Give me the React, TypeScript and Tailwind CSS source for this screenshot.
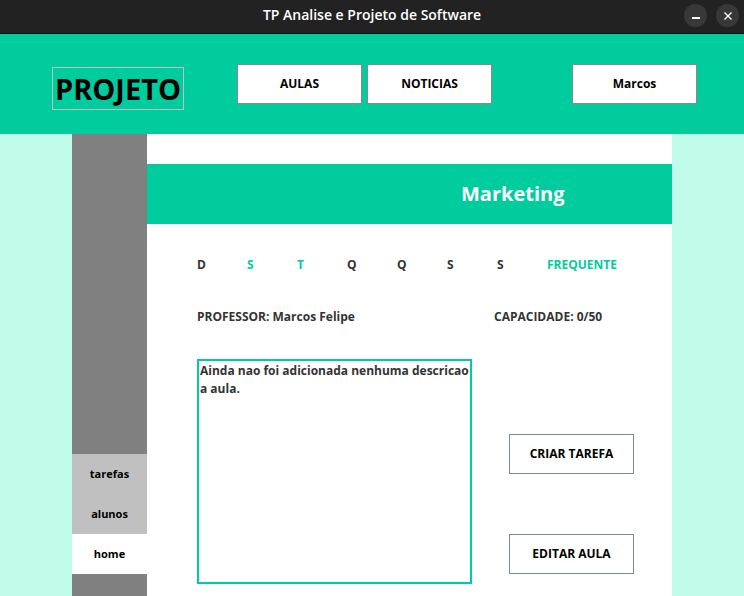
import React from "react";

const font = { fontFamily: '"Open Sans", "Noto Sans", sans-serif' };

export default function App() {
  const days: { l: string; g?: boolean }[] = [
    { l: "D" },
    { l: "S", g: true },
    { l: "T", g: true },
    { l: "Q" },
    { l: "Q" },
    { l: "S" },
    { l: "S" },
  ];
  return (
    <div className="w-[744px] h-[596px] flex flex-col overflow-hidden bg-[#c1fcea]" style={font}>
      {/* title bar */}
      <div className="h-[34px] bg-[#222222] border-b border-black flex items-center relative shrink-0">
        <div className="flex-1 text-center text-white text-[14px] font-semibold pb-[4px]">TP Analise e Projeto de Software</div>
        <div className="absolute right-[5px] top-[4px] flex gap-[9px]">
          <div className="w-[23px] h-[23px] rounded-full bg-[#383838] flex items-center justify-center">
            <div className="w-[8px] h-[1.5px] bg-white mt-[5px]" />
          </div>
          <div className="w-[23px] h-[23px] rounded-full bg-[#383838] flex items-center justify-center">
            <svg width="10" height="10" viewBox="0 0 10 10">
              <path d="M1.5 1.5 L8.5 8.5 M8.5 1.5 L1.5 8.5" stroke="white" strokeWidth="1.4" />
            </svg>
          </div>
        </div>
      </div>
      {/* header */}
      <div className="h-[100px] bg-[#00cc9e] flex items-start shrink-0 pl-[52px]">
        <div className="mt-[33px] w-[132px] h-[43px] border border-[#b9c4c1] flex items-center justify-center text-[29px] font-bold text-black leading-none">
          PROJETO
        </div>
        <div className="ml-[53px] mt-[30px] w-[125px] h-[40px] bg-white border border-[#8a8a8a] flex items-center justify-center text-[12px] font-bold text-black">
          AULAS
        </div>
        <div className="ml-[5px] mt-[30px] w-[125px] h-[40px] bg-white border border-[#8a8a8a] flex items-center justify-center text-[12px] font-bold text-black">
          NOTICIAS
        </div>
        <div className="ml-[80px] mt-[30px] w-[125px] h-[40px] bg-white border border-[#8a8a8a] flex items-center justify-center text-[12px] font-bold text-black">
          Marcos
        </div>
      </div>
      {/* body */}
      <div className="flex-1 flex pl-[72px]">
        <div className="w-[75px] bg-[#808080] flex flex-col">
          <div className="h-[320px]" />
          <div className="h-[40px] bg-[#c0c0c0] flex items-center justify-center text-[11px] font-bold text-black">tarefas</div>
          <div className="h-[40px] bg-[#c0c0c0] flex items-center justify-center text-[11px] font-bold text-black">alunos</div>
          <div className="h-[40px] bg-white flex items-center justify-center text-[11px] font-bold text-black">home</div>
        </div>
        <div className="w-[525px] bg-white flex flex-col pt-[30px]">
          <div className="h-[60px] bg-[#00cc9e] flex items-center pl-[314px] text-white text-[20px] font-bold">
            Marketing
          </div>
          <div className="pl-[50px] mt-[33px] flex text-[12px] font-bold leading-[16px] text-[#333333]">
            {days.map((d, i) => (
              <div key={i} className={"w-[50px] " + (d.g ? "text-[#00cc9e]" : "")}>
                {d.l}
              </div>
            ))}
            <div className="text-[#00cc9e]">FREQUENTE</div>
          </div>
          <div className="pl-[50px] mt-[36px] flex text-[12px] font-bold leading-[16px] text-[#333333]">
            <div className="w-[297px]">PROFESSOR: Marcos Felipe</div>
            <div>CAPACIDADE: 0/50</div>
          </div>
          <div className="pl-[50px] mt-[34px] flex">
            <div className="w-[275px] h-[225px] border-2 border-[#00cc9e] px-[1px] pt-[1px] text-[12px] font-bold leading-[18px] text-[#333333]">
              Ainda nao foi adicionada nenhuma descricao a aula.
            </div>
            <div className="ml-[37px] flex flex-col pt-[75px] gap-[60px]">
              <div className="w-[125px] h-[40px] border border-[#7a8896] flex items-center justify-center text-[12px] font-bold text-black">
                CRIAR TAREFA
              </div>
              <div className="w-[125px] h-[40px] border border-[#7a8896] flex items-center justify-center text-[12px] font-bold text-black">
                EDITAR AULA
              </div>
            </div>
          </div>
        </div>
      </div>
    </div>
  );
}
